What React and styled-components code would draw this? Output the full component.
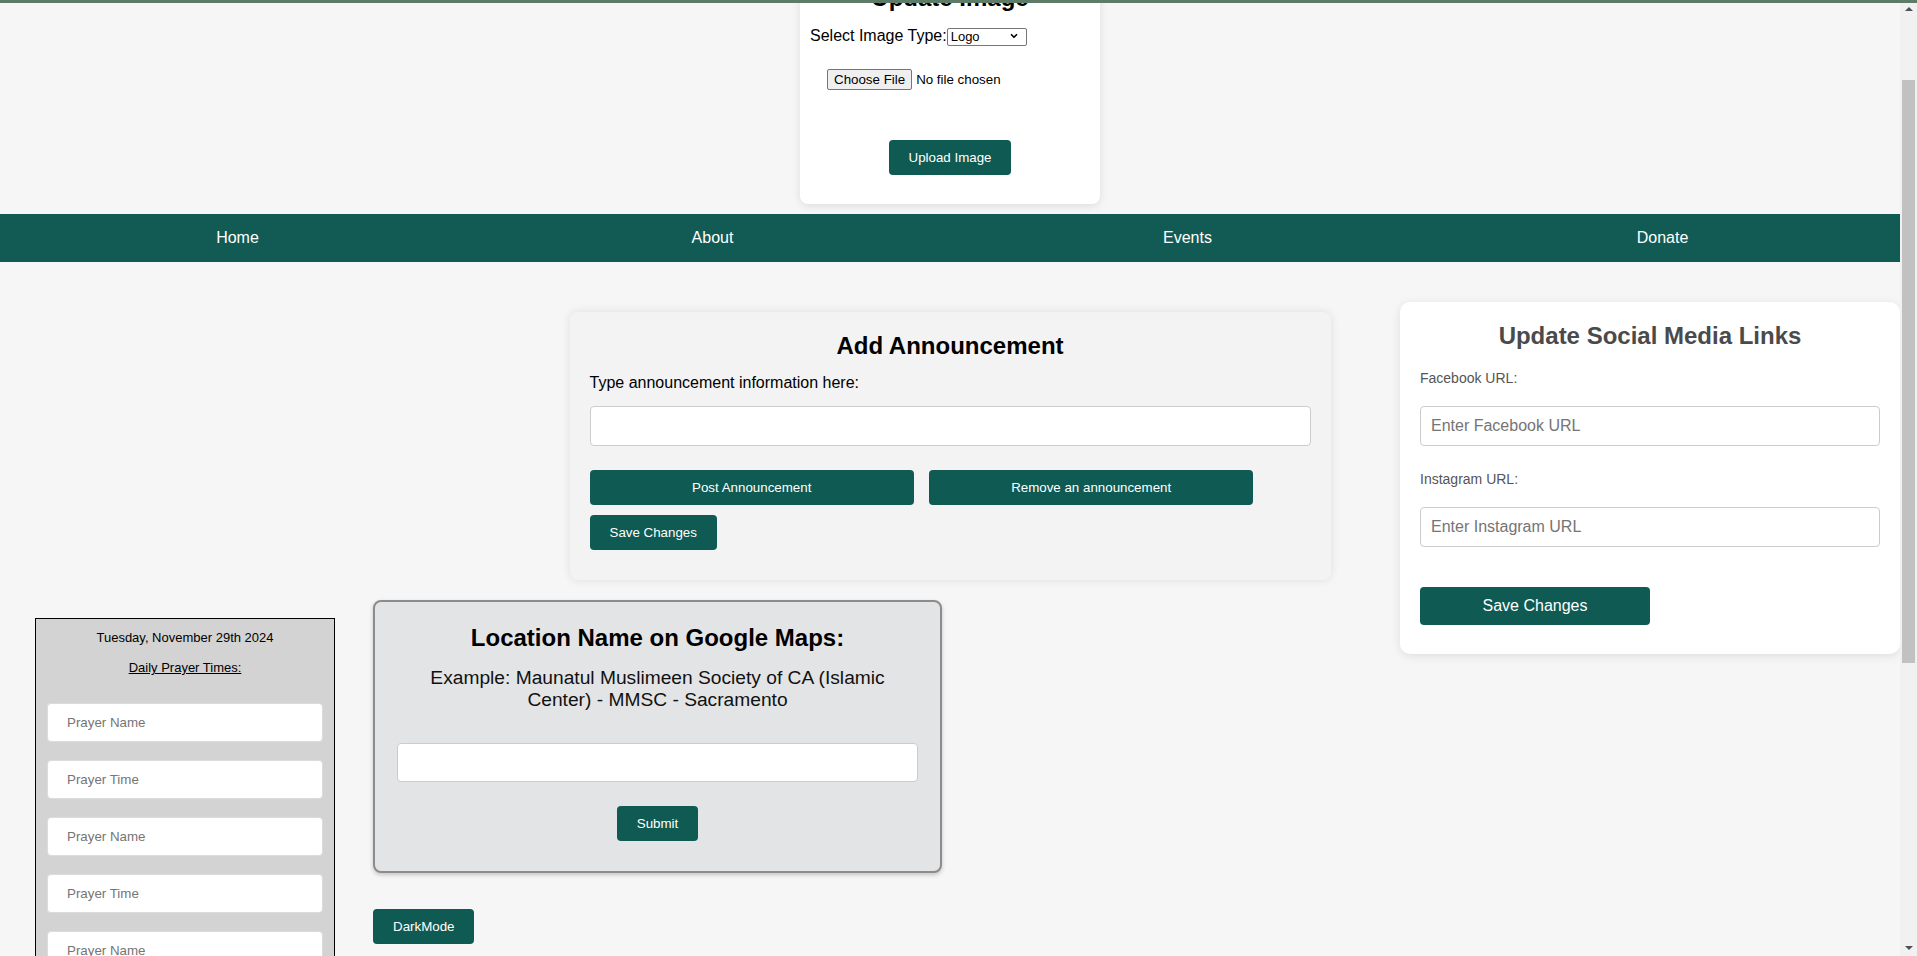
import React, { useLayoutEffect, useRef } from 'react';
import styled, { createGlobalStyle } from 'styled-components';
import { ChevronDown } from 'lucide-react';

const GlobalStyle = createGlobalStyle`
  html, body {
    margin: 0;
    padding: 0;
    height: 100%;
    overflow: hidden;
  }
  body {
    font-family: "Liberation Sans", Arial, sans-serif;
    background: #f6f6f6;
    color: #000;
  }
  * { box-sizing: border-box; }
  input, button, select { font-family: inherit; }
`;

const Viewport = styled.div`
  display: flex;
  height: 100vh;
`;

const Scroller = styled.div`
  flex: 1;
  min-width: 0;
  overflow-y: scroll;
  overflow-x: hidden;
  background: #f6f6f6;
  scrollbar-width: none;

  &::-webkit-scrollbar { display: none; }
`;

/* browser scrollbar drawn beside the page */
const ScrollRail = styled.div`
  width: 17px;
  flex-shrink: 0;
  background: #f1f1f1;
  display: flex;
  flex-direction: column;
  align-items: center;
`;

const RailArrow = styled.div`
  height: 17px;
  display: flex;
  align-items: center;
  justify-content: center;

  &::after {
    content: '';
    width: 0;
    height: 0;
    border-left: 4px solid transparent;
    border-right: 4px solid transparent;
    ${p => (p.$down ? 'border-top' : 'border-bottom')}: 4px solid #505050;
  }
`;

const RailThumb = styled.div`
  width: 13px;
  height: 583px;
  margin-top: 63px;
  background: #c1c1c1;
`;

const RailFill = styled.div`
  flex: 1;
`;

const WindowEdge = styled.div`
  position: fixed;
  top: 0;
  left: 0;
  right: 0;
  height: 3px;
  background: #5e7b67;
  z-index: 20;
`;

const Page = styled.div`
  min-height: 1512px;
`;

/* ---------- upload image ---------- */

const UploadSection = styled.section`
  display: flex;
  justify-content: center;
  padding-top: 58px;
`;

const UploadCard = styled.div`
  width: 300px;
  background: #fff;
  border-radius: 8px;
  box-shadow: 0 2px 8px rgba(0, 0, 0, 0.1);
  padding: 20px 10px 29px;
`;

const CardTitle = styled.h2`
  margin: 0 0 ${p => p.$gap || 0}px;
  font-size: 24px;
  line-height: 28px;
  font-weight: bold;
  text-align: center;
  color: ${p => p.$color || '#000'};
`;

const SelectRow = styled.div`
  display: flex;
  align-items: center;
  height: 18px;
  font-size: 16px;
`;

const SelectBox = styled.div`
  position: relative;
  width: 80px;
  height: 18px;
`;

const Select = styled.select`
  appearance: none;
  width: 100%;
  height: 100%;
  border: 1px solid #767676;
  border-radius: 2px;
  background: #fff;
  color: #000;
  font-size: 13px;
  padding: 0 0 0 3px;
`;

const SelectArrow = styled.span`
  position: absolute;
  right: 8px;
  top: 4px;
  display: flex;
  pointer-events: none;
`;

const FileRow = styled.div`
  margin-top: 24px;
  padding-left: 17px;
  height: 21px;
  display: flex;
  align-items: center;
`;

const FileInput = styled.input`
  font-size: 13.33px;
  color: #000;

  &::file-selector-button {
    font: inherit;
    height: 21px;
    padding: 1px 6px;
    margin-right: 4px;
    border: 1px solid #767676;
    border-radius: 2px;
    background: #efefef;
    color: #000;
  }
`;

const CenterRow = styled.div`
  display: flex;
  justify-content: ${p => p.$align || 'center'};
  margin-top: ${p => p.$gap || 0}px;
`;

const GreenButton = styled.button`
  height: ${p => p.$h || 35}px;
  width: ${p => p.$w || 'auto'};
  padding: 0 20px;
  border: none;
  border-radius: 4px;
  background: #0f5a52;
  color: #fff;
  font-size: ${p => p.$size || 13.33}px;
  cursor: pointer;
`;

/* ---------- nav ---------- */

const Nav = styled.nav`
  margin-top: 10px;
  height: 48px;
  background: #115b54;
  display: grid;
  grid-template-columns: repeat(4, 1fr);
`;

const NavLink = styled.a`
  color: #fff;
  text-align: center;
  line-height: 48px;
  font-size: 16px;
  text-decoration: none;
`;

/* ---------- main ---------- */

const Main = styled.main`
  display: grid;
  grid-template-columns: 1fr 761px 1fr;
  row-gap: 20px;
  padding-top: 40px;
`;

const AnnounceCard = styled.div`
  grid-column: 2;
  grid-row: 1;
  margin-top: 10px;
  background: #f3f3f3;
  border-radius: 8px;
  box-shadow: 0 0 10px rgba(0, 0, 0, 0.1);
  padding: 20px 20px 30px;
`;

const FieldLabel = styled.label`
  display: block;
  font-size: ${p => p.$size || 16}px;
  line-height: ${p => (p.$size || 16) + 2}px;
  color: ${p => p.$color || '#000'};
  margin-top: ${p => p.$top || 0}px;
`;

const TextField = styled.input`
  display: block;
  width: 100%;
  height: ${p => p.$h || 40}px;
  margin-top: ${p => p.$top || 0}px;
  border: 1px solid #ccc;
  border-radius: 4px;
  background: #fff;
  padding: 0 10px;
  font-size: 16px;

  &::placeholder { color: #757575; }
`;

const AnnounceButtons = styled.div`
  display: flex;
  flex-wrap: wrap;
  gap: 10px 15px;
  margin-top: 24px;
`;

const WideButton = styled(GreenButton)`
  width: 45%;
`;

const SocialCard = styled.div`
  grid-column: 3;
  grid-row: 1 / span 2;
  justify-self: end;
  align-self: start;
  width: 500px;
  background: #fff;
  border-radius: 10px;
  box-shadow: 0 2px 10px rgba(0, 0, 0, 0.1);
  padding: 20px 20px 29px;
`;

const LowerRow = styled.div`
  grid-column: 1 / span 2;
  grid-row: 2;
  display: flex;
  align-items: flex-start;
  gap: 38px;
  padding-left: 35px;
`;

/* ---------- prayer times ---------- */

const PrayerPanel = styled.div`
  width: 300px;
  margin-top: 18px;
  background: #d3d3d3;
  border: 1px solid #000;
  padding: 11px 11px 20px;
  text-align: center;
  font-size: 13px;
`;

const PanelText = styled.p`
  margin: ${p => p.$top || 0}px 0 0;
  line-height: 15px;
  text-decoration: ${p => (p.$underline ? 'underline' : 'none')};
`;

const PrayerList = styled.div`
  display: flex;
  flex-direction: column;
  gap: 18px;
  margin-top: 28px;
`;

const PrayerInput = styled.input`
  height: 39px;
  width: 100%;
  border: 1px solid #dcdcdc;
  border-radius: 4px;
  background: #fff;
  padding: 0 19px;
  font-size: 13.33px;

  &::placeholder { color: #757575; }
`;

/* ---------- location ---------- */

const LocationColumn = styled.div`
  display: flex;
  flex-direction: column;
  align-items: flex-start;
`;

const LocationCard = styled.div`
  width: 569px;
  background: #e3e4e6;
  border: 2px solid #8c8c8c;
  border-radius: 8px;
  box-shadow: 0 2px 4px rgba(0, 0, 0, 0.2);
  padding: 22px 22px 30px;
  text-align: center;
`;

const Example = styled.p`
  margin: 15px 0 0;
  font-size: 19.2px;
  line-height: 22px;
  color: #111;
`;

const DarkModeRow = styled.div`
  margin-top: 36px;
`;

const prayerFields = [
  'Prayer Name', 'Prayer Time',
  'Prayer Name', 'Prayer Time',
  'Prayer Name', 'Prayer Time',
  'Prayer Name', 'Prayer Time',
  'Prayer Name', 'Prayer Time',
];

const App = () => {
  const scrollRef = useRef(null);

  useLayoutEffect(() => {
    if (scrollRef.current) scrollRef.current.scrollTop = 94;
  }, []);

  return (
    <Viewport>
      <GlobalStyle />
      <WindowEdge />
      <Scroller ref={scrollRef}>
        <Page>
          <UploadSection>
            <UploadCard>
              <CardTitle $gap={15}>Update Image</CardTitle>
              <SelectRow>
                Select Image Type:
                <SelectBox>
                  <Select defaultValue="logo">
                    <option value="logo">Logo</option>
                    <option value="banner">Banner</option>
                  </Select>
                  <SelectArrow>
                    <ChevronDown size={10} strokeWidth={4} color="#000" />
                  </SelectArrow>
                </SelectBox>
              </SelectRow>
              <FileRow>
                <FileInput type="file" />
              </FileRow>
              <CenterRow $gap={50}>
                <GreenButton>Upload Image</GreenButton>
              </CenterRow>
            </UploadCard>
          </UploadSection>

          <Nav>
            <NavLink>Home</NavLink>
            <NavLink>About</NavLink>
            <NavLink>Events</NavLink>
            <NavLink>Donate</NavLink>
          </Nav>

          <Main>
            <AnnounceCard>
              <CardTitle $gap={14}>Add Announcement</CardTitle>
              <FieldLabel>Type announcement information here:</FieldLabel>
              <TextField $top={14} />
              <AnnounceButtons>
                <WideButton>Post Announcement</WideButton>
                <WideButton>Remove an announcement</WideButton>
                <GreenButton>Save Changes</GreenButton>
              </AnnounceButtons>
            </AnnounceCard>

            <SocialCard>
              <CardTitle $color="#4a4a4a">Update Social Media Links</CardTitle>
              <FieldLabel $size={14} $color="#555" $top={20}>Facebook URL:</FieldLabel>
              <TextField $top={20} placeholder="Enter Facebook URL" />
              <FieldLabel $size={14} $color="#555" $top={25}>Instagram URL:</FieldLabel>
              <TextField $top={20} placeholder="Enter Instagram URL" />
              <CenterRow $gap={40} $align="flex-start">
                <GreenButton $w="50%" $h={38} $size={16}>Save Changes</GreenButton>
              </CenterRow>
            </SocialCard>

            <LowerRow>
              <PrayerPanel>
                <PanelText>Tuesday, November 29th 2024</PanelText>
                <PanelText $top={15} $underline>Daily Prayer Times:</PanelText>
                <PrayerList>
                  {prayerFields.map((p, i) => (
                    <PrayerInput key={i} placeholder={p} />
                  ))}
                  <CenterRow>
                    <GreenButton>Update Prayer Times</GreenButton>
                  </CenterRow>
                </PrayerList>
              </PrayerPanel>

              <LocationColumn>
                <LocationCard>
                  <CardTitle>Location Name on Google Maps:</CardTitle>
                  <Example>
                    Example: Maunatul Muslimeen Society of CA (Islamic Center) - MMSC - Sacramento
                  </Example>
                  <TextField $top={32} $h={39} />
                  <CenterRow $gap={24}>
                    <GreenButton>Submit</GreenButton>
                  </CenterRow>
                </LocationCard>
                <DarkModeRow>
                  <GreenButton>DarkMode</GreenButton>
                </DarkModeRow>
              </LocationColumn>
            </LowerRow>
          </Main>
        </Page>
      </Scroller>
      <ScrollRail>
        <RailArrow />
        <RailThumb />
        <RailFill />
        <RailArrow $down />
      </ScrollRail>
    </Viewport>
  );
};

export default App;
